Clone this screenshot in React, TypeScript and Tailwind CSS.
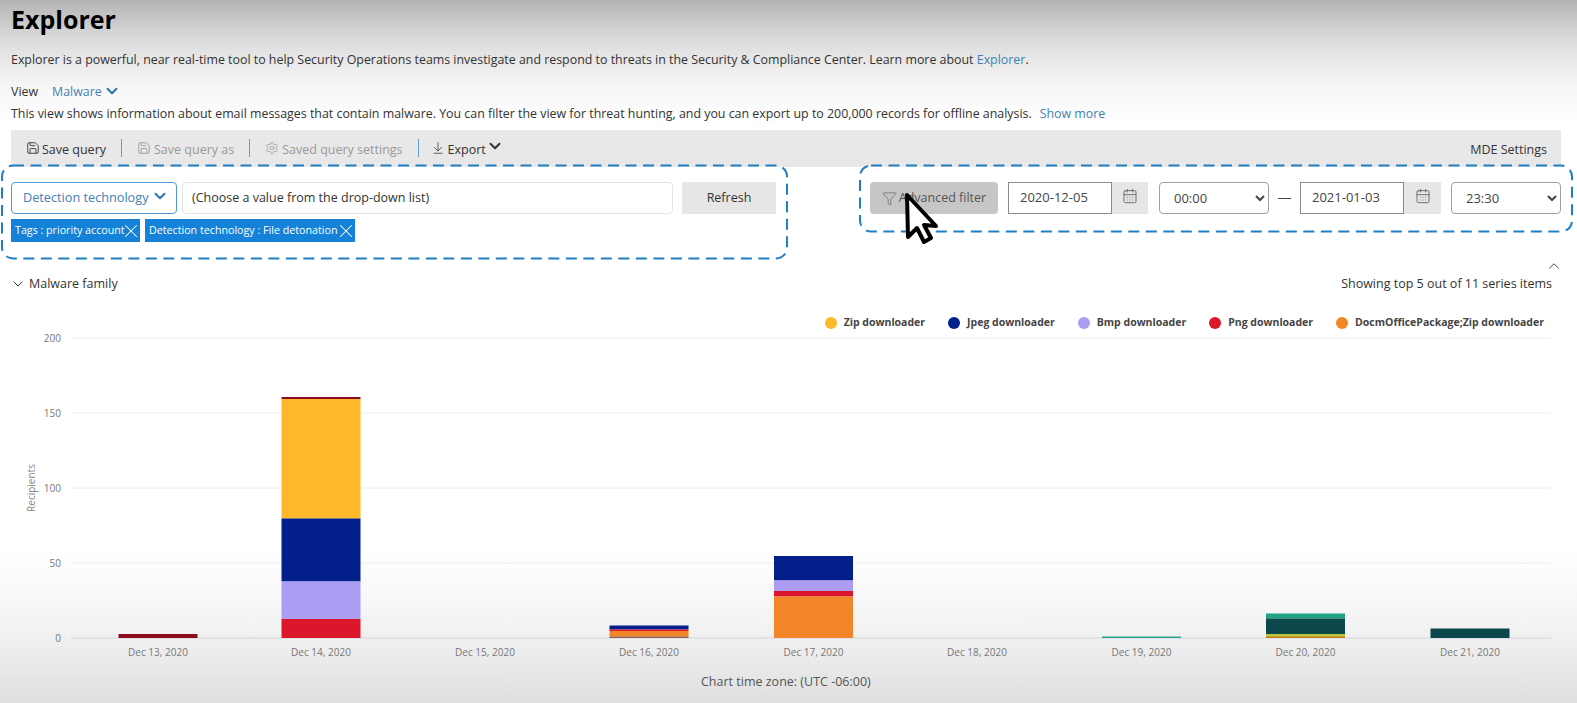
import { ChevronDown, ChevronUp, X, Save, Settings, ArrowDownToLine, Funnel, CalendarDays } from "lucide-react";

const font = "font-['Open_Sans','Noto_Sans',sans-serif]";

const BASE = 638;
const bars: { x: number; segs: [number, number, string][] }[] = [
  { x: 158, segs: [[634, 638, "#8c0e1e"]] },
  {
    x: 321,
    segs: [
      [397, 399, "#8c0e1e"],
      [399, 518.5, "#ffb829"],
      [518.5, 581.5, "#021f8a"],
      [581.5, 619, "#ac9df2"],
      [619, 638, "#dc172b"],
    ],
  },
  {
    x: 649,
    segs: [
      [625.5, 629.5, "#021f8a"],
      [629.5, 631, "#dc172b"],
      [631, 636.5, "#f28527"],
      [636.5, 638, "#9a5a4a"],
    ],
  },
  {
    x: 813.5,
    segs: [
      [556, 580.5, "#021f8a"],
      [580.5, 591, "#ac9df2"],
      [591, 596.5, "#dc172b"],
      [596.5, 638, "#f28527"],
    ],
  },
  { x: 1141.5, segs: [[636.5, 638, "#2aa58c"]] },
  {
    x: 1305.5,
    segs: [
      [613.5, 618.5, "#21a384"],
      [618.5, 634, "#0b474b"],
      [634, 636.3, "#b9c83c"],
      [636.3, 638, "#b8800f"],
    ],
  },
  { x: 1470, segs: [[628.5, 638, "#0b474b"]] },
];
const dates = [
  ["Dec 13, 2020", 158],
  ["Dec 14, 2020", 321],
  ["Dec 15, 2020", 485],
  ["Dec 16, 2020", 649],
  ["Dec 17, 2020", 813.5],
  ["Dec 18, 2020", 977],
  ["Dec 19, 2020", 1141.5],
  ["Dec 20, 2020", 1305.5],
  ["Dec 21, 2020", 1470],
] as const;
const ticks: [string, number][] = [
  ["200", 338],
  ["150", 413],
  ["100", 488],
  ["50", 563],
  ["0", 638],
];
const legend: [string, string][] = [
  ["Zip downloader", "#ffb829"],
  ["Jpeg downloader", "#021f8a"],
  ["Bmp downloader", "#ac9df2"],
  ["Png downloader", "#dc172b"],
  ["DocmOfficePackage;Zip downloader", "#f28527"],
];

function Chart() {
  const top = 330;
  return (
    <svg width={1577} height={340} viewBox={`0 ${top} 1577 340`} className="-mt-[3px] block">
      {ticks.map(([t, y]) => (
        <g key={t}>
          <line x1={71} x2={1551} y1={y} y2={y} stroke={y === BASE ? "#d2d2de" : "#ececf0"} strokeWidth={1} />
          <text x={61} y={y + 4} textAnchor="end" fontSize={10} fill="#777">
            {t}
          </text>
        </g>
      ))}
      <text transform="translate(35 488) rotate(-90)" textAnchor="middle" fontSize={10} fill="#888">
        Recipients
      </text>
      {bars.map((b) =>
        b.segs.map(([y1, y2, c]) => (
          <rect key={`${b.x}-${y1}`} x={b.x - 39.5} y={y1} width={79} height={y2 - y1} fill={c} />
        ))
      )}
      {dates.map(([d, x]) => (
        <text key={d} x={x} y={656} textAnchor="middle" fontSize={10} fill="#777">
          {d}
        </text>
      ))}
    </svg>
  );
}

function Annotations() {
  return (
    <svg className="absolute top-0 left-0" width={1577} height={270} fill="none">
      <rect x={2} y={165.5} width={785} height={93} rx={11} stroke="#1f7fc4" strokeWidth={2} strokeDasharray="11 6.5" />
      <rect x={860} y={165.5} width={712} height={66} rx={11} stroke="#1f7fc4" strokeWidth={2} strokeDasharray="11 6.5" />
    </svg>
  );
}

function Cursor() {
  return (
    <svg className="absolute top-[190px] left-[900px]" width={44} height={58} viewBox="0 0 44 58">
      <path
        d="M7 5 L8 47 L17 38 L24 52 L31 48 L24 35 L36 36 Z"
        fill="#fff"
        stroke="#000"
        strokeWidth={4}
        strokeLinejoin="round"
      />
    </svg>
  );
}

function DateBox({ value, w }: { value: string; w: string }) {
  return (
    <div className={`flex h-8 ${w} bg-[#e6e6e6]`}>
      <div className="flex h-8 w-[104px] items-center border border-[#8a8a8a] bg-white pl-[11px] text-[13px] text-[#444]">
        {value}
      </div>
      <div className="flex flex-1 items-center justify-center text-[#666]">
        <CalendarDays size={16} strokeWidth={1.4} className="-translate-y-0.5" />
      </div>
    </div>
  );
}

function TimeSelect({ value }: { value: string }) {
  return (
    <select
      defaultValue={value}
      className="h-8 w-[110px] rounded border border-[#a0a0a0] bg-white pl-[10px] text-[13px] text-[#444]"
    >
      <option>{value}</option>
    </select>
  );
}

function Tag({ label, w }: { label: string; w: string }) {
  return (
    <div className={`flex h-[23px] ${w} items-center justify-between overflow-hidden bg-[#1382d8] pl-[4px] text-[10.7px] text-white`}>
      <span className="whitespace-nowrap">{label}</span>
      <X size={22} strokeWidth={1.1} className="-mr-[2px] -ml-[6px] shrink-0" />
    </div>
  );
}

function Sep() {
  return <span className="mx-[15px] h-[18px] w-px shrink-0 -translate-y-0.5 bg-[#5b9fd0]" />;
}

export default function App() {
  return (
    <div
      className={`${font} relative h-[703px] w-full overflow-hidden text-[#333] bg-[linear-gradient(to_bottom,#b4b4b4_0px,#dcdcdc_40px,#f6f6f6_85px,#ffffff_125px,#ffffff_550px,#f6f6f6_610px,#ebebeb_660px,#dedede_703px)]`}
    >
      <div className="px-[11px]">
        <h1 className="h-[42px] pt-[1px] text-[25px] leading-[36px] font-bold text-black">Explorer</h1>
        <p className="mt-[8px] h-[20px] text-[12.4px] leading-[20px] whitespace-nowrap">
          Explorer is a powerful, near real-time tool to help Security Operations teams investigate and respond to threats in the Security &amp; Compliance Center. Learn more about{" "}
          <span className="text-[#3f7fb5]">Explorer</span>.
        </p>
        <div className="mt-[12px] flex h-[21px] items-center text-[12.4px]">
          <span>View</span>
          <span className="ml-[14px] text-[#4a80b5]">Malware</span>
          <ChevronDown size={18} strokeWidth={2.6} className="ml-px -translate-y-0.5 text-[#2b74b0]" />
        </div>
        <p className="h-[22px] text-[12.4px] leading-[22px] whitespace-nowrap">
          This view shows information about email messages that contain malware. You can filter the view for threat hunting, and you can export up to 200,000 records for offline analysis.
          <span className="ml-2 text-[#3f7fb5]">Show more</span>
        </p>
        <div className="mt-[5px] flex h-[37px] w-[1550px] items-center bg-[#e8e8e8] pt-[3px] pr-[14px] pl-[15px] text-[12.5px]">
          <Save size={14} strokeWidth={1.5} className="-translate-y-0.5" />
          <span className="ml-[2px]">Save query</span>
          <Sep />
          <Save size={14} strokeWidth={1.5} className="-translate-y-0.5 text-[#999]" />
          <span className="ml-[3px] text-[#999]">Save query as</span>
          <Sep />
          <Settings size={14} strokeWidth={1.3} className="-translate-y-0.5 text-[#999]" />
          <span className="ml-[3px] text-[#999]">Saved query settings</span>
          <Sep />
          <ArrowDownToLine size={14} strokeWidth={1.3} className="-ml-[3px] -translate-y-0.5" />
          <span className="ml-[3px]">Export</span>
          <ChevronDown size={18} strokeWidth={2.6} className="-translate-y-1" />
          <span className="ml-auto">MDE Settings</span>
        </div>

        <div className="mt-[15px] flex h-[76px] w-[1550px] items-start justify-between">
          <div className="w-[765px]">
            <div className="flex h-8 items-center">
              <div className="flex h-8 w-[166px] items-center rounded-sm border border-[#4f9ad4] bg-white pl-[11px] text-[12.7px] text-[#3f80b8]">
                Detection technology
                <ChevronDown size={18} strokeWidth={2.6} className="ml-0.5 -translate-y-0.5 text-[#2b74b0]" />
              </div>
              <div className="ml-[5px] flex h-8 w-[491px] items-center rounded-sm border border-[#e4e4e4] bg-white pl-[9px] text-[12.5px]">
                (Choose a value from the drop-down list)
              </div>
              <div className="ml-[9px] flex h-8 w-[94px] items-center justify-center bg-[#e6e6e6] text-[12.5px]">Refresh</div>
            </div>
            <div className="mt-[5px] flex gap-[5px]">
              <Tag label="Tags : priority account" w="w-[129px]" />
              <Tag label="Detection technology : File detonation" w="w-[210px]" />
            </div>
          </div>
          <div className="flex h-8 w-[691px] items-center">
            <div className="flex h-8 w-[128px] items-center justify-center gap-[2px] rounded-sm bg-[#c6c6c6] text-[12.5px] text-[#555]">
              <Funnel size={15} strokeWidth={1} />
              Advanced filter
            </div>
            <div className="ml-[10px]"><DateBox value="2020-12-05" w="w-[140px]" /></div>
            <div className="ml-[11px]"><TimeSelect value="00:00" /></div>
            <span className="mr-[9px] ml-[9px] h-px w-[13px] bg-[#444]" />
            <DateBox value="2021-01-03" w="w-[141px]" />
            <div className="ml-[10px]"><TimeSelect value="23:30" /></div>
          </div>
        </div>

        <div className="-mt-[1px] flex h-[17px] w-[1552px] justify-end">
          <ChevronUp size={18} strokeWidth={1.2} />
        </div>
        <div className="flex h-[20px] w-[1541px] items-center justify-between text-[12.5px]">
          <div className="flex items-center">
            <ChevronDown size={16} strokeWidth={1.5} className="-ml-px" />
            <span className="ml-[3px]">Malware family</span>
          </div>
          <span>Showing top 5 out of 11 series items</span>
        </div>
        <div className="mt-[19px] flex h-[20px] w-[1533px] items-center justify-end gap-[23px] text-[10.5px] font-bold text-[#444]">
          {legend.map(([l, c]) => (
            <div key={l} className="flex items-center gap-[7px]">
              <svg width={12} height={12}><circle cx={6} cy={6} r={6} fill={c} /></svg>
              <span>{l}</span>
            </div>
          ))}
        </div>
      </div>
      <Chart />
      <div className="mt-[3px] ml-[701px] text-[12.5px] text-[#555]">Chart time zone: (UTC -06:00)</div>

      <Annotations />
      <Cursor />
    </div>
  );
}
